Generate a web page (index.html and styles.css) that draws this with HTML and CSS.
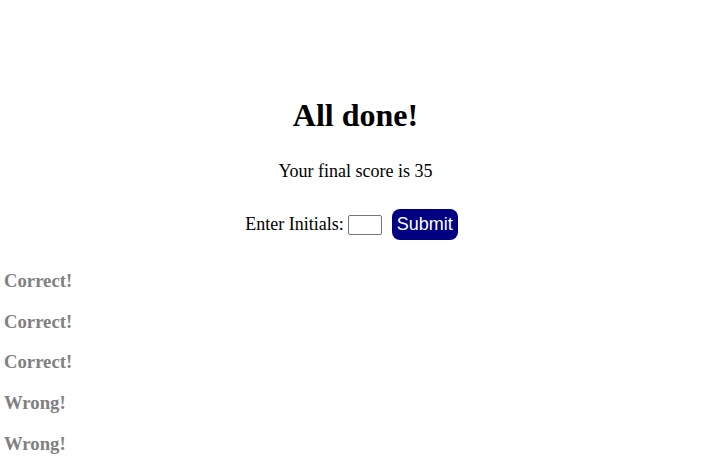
FILE: index.html
```html
<!DOCTYPE html>
<html>
<head>
<meta charset="utf-8">
<link rel="stylesheet" href="styles.css">
</head>
<body>
<div class="page">
  <section class="done">
    <h1 class="title">All done!</h1>
    <p class="score">Your final score is 35</p>
    <form class="entry">
      <label class="label" for="initials">Enter Initials:</label>
      <input class="initials" id="initials" type="text">
      <button class="submit" type="button">Submit</button>
    </form>
  </section>
  <div class="feedback">
    <h3 class="result">Correct!</h3>
    <h3 class="result">Correct!</h3>
    <h3 class="result">Correct!</h3>
    <h3 class="result">Wrong!</h3>
    <h3 class="result">Wrong!</h3>
  </div>
</div>
</body>
</html>
```
FILE: styles.css
```css
html, body {
  margin: 0;
  padding: 0;
  background: #fff;
}
body {
  font-family: "Liberation Serif", "Times New Roman", serif;
  color: #000;
}
.page {
  padding: 76px 4px 0;
}
.done {
  text-align: center;
}
.title {
  font-size: 32px;
  font-weight: bold;
  margin: 21px 0 0;
}
.score {
  font-size: 18px;
  margin: 26.5px 0 0;
}
.entry {
  display: flex;
  justify-content: center;
  align-items: center;
  font-size: 18px;
  margin: 27.5px 0 30px;
  padding-right: 8px;
}
.label {
  margin-right: 4px;
}
.initials {
  width: 28px;
  height: 16px;
  padding: 1px 2px;
  border: 1px solid #767676;
  border-radius: 2px;
  margin: 0 10px 0 0;
}
.submit {
  background: #000080;
  color: #fff;
  border: none;
  border-radius: 8px;
  font-family: "Liberation Sans", Arial, sans-serif;
  font-size: 18px;
  padding: 5px 5px;
  height: 31px;
}
.result {
  color: #808080;
  font-size: 18.72px;
  font-weight: bold;
  margin: 18.72px 0;
}
```
